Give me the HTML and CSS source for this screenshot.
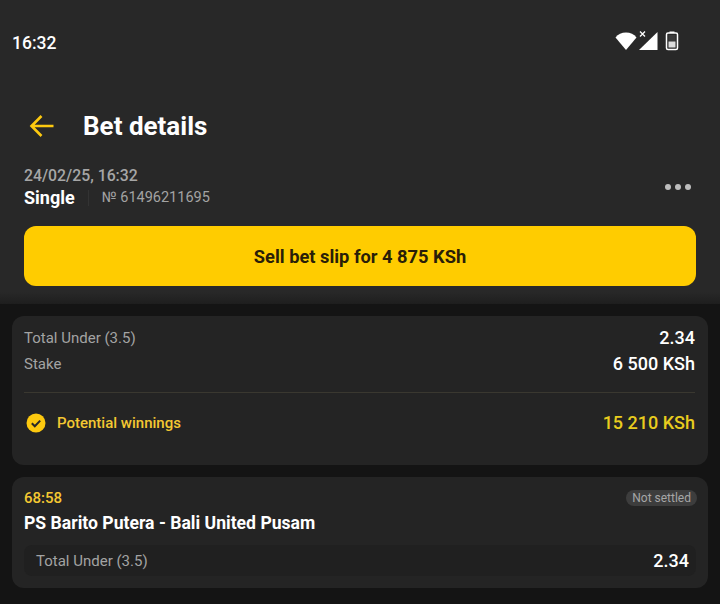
FILE: index.html
```html
<!DOCTYPE html>
<html lang="en">
<head>
  <meta charset="UTF-8">
  <meta name="viewport" content="width=device-width, initial-scale=1.0">
  <title>Bet details</title>
  <link rel="stylesheet" href="styles.css">
</head>
<body>
  <header class="top">
    <div class="status">
      <span class="time">16:32</span>
      <div class="status-icons">
        <svg class="wifi" width="22" height="18" viewBox="0 0 22 18"><path d="M0.500 5.500C3 2.300 6.700 0.500 11 0.500s8 1.800 10.500 5L11 18z" fill="#fff"/></svg>
        <svg class="signal" width="22" height="20" viewBox="0 0 22 20">
          <path d="M20.500 1v18H2z" fill="#fff"/>
          <path d="M3 0.500l5 5M8 0.500l-5 5" stroke="#fff" stroke-width="1.300"/>
        </svg>
        <svg class="battery" width="14" height="20" viewBox="0 0 14 20">
          <path d="M4.500 0.500h5v1.500h-5z" fill="#fff"/>
          <rect x="1.500" y="2" width="11" height="16.500" rx="1.500" fill="none" stroke="#fff" stroke-width="1.500"/>
          <rect x="3.500" y="4" width="7" height="6.500" fill="#3a3a3a"/>
          <rect x="3.500" y="10.500" width="7" height="6" fill="#ddd"/>
        </svg>
      </div>
    </div>
    <div class="titlebar">
      <svg class="back" width="26" height="24" viewBox="0 0 26 24"><path d="M24.500 12H3M12.500 2L2.500 12l10 10" fill="none" stroke="#fdc90f" stroke-width="2.600"/></svg>
      <h1>Bet details</h1>
    </div>
    <div class="meta">
      <div>
        <div class="date">24/02/25, 16:32</div>
        <div class="kind">
          <span class="single">Single</span>
          <span class="sep"></span>
          <span class="number">№ 61496211695</span>
        </div>
      </div>
      <div class="dots"><i></i><i></i><i></i></div>
    </div>
    <button class="sell">Sell bet slip for 4 875 KSh</button>
  </header>

  <main class="content">
    <section class="card summary">
      <div class="row">
        <span class="label">Total Under (3.5)</span>
        <span class="value">2.34</span>
      </div>
      <div class="row stake">
        <span class="label">Stake</span>
        <span class="value">6 500 KSh</span>
      </div>
      <div class="row winnings">
        <span class="win-label">
          <svg width="20" height="20" viewBox="0 0 20 20">
            <circle cx="10" cy="10" r="9.500" fill="#fdc90f"/>
            <path d="M5.800 10.200l3 3 5.400-5.600" fill="none" stroke="#282828" stroke-width="2"/>
          </svg>
          Potential winnings
        </span>
        <span class="win-value">15 210 KSh</span>
      </div>
    </section>

    <section class="card event">
      <div class="row event-top">
        <span class="clock">68:58</span>
        <span class="badge">Not settled</span>
      </div>
      <div class="teams">PS Barito Putera - Bali United Pusam</div>
      <div class="market">
        <span class="label">Total Under (3.5)</span>
        <span class="value">2.34</span>
      </div>
    </section>
  </main>
</body>
</html>
```

FILE: styles.css
```css
html, body {
  height: 100%;
}
body {
  margin: 0;
  font-family: Roboto, Arial, sans-serif;
  background: #141414;
  color: #fff;
  overflow: hidden;
}
.top {
  height: 304px;
  box-sizing: border-box;
  background: linear-gradient(#282828 292px, #1e1e1e);
  padding: 0 24px;
}
.status {
  height: 86px;
  display: flex;
  justify-content: space-between;
  align-items: center;
  margin-left: -12px;
  margin-right: -1px;
}
.time {
  font-size: 17.500px;
  font-weight: 500;
}
.status-icons {
  display: flex;
  align-items: flex-end;
  margin-right: 18px;
  margin-bottom: 4px;
}
.wifi {
  margin-bottom: 1px;
}
.signal {
  margin-right: 6px;
}
.titlebar {
  height: 78px;
  display: flex;
  align-items: center;
  gap: 28px;
  padding-left: 5px;
  padding-top: 1px;
  box-sizing: border-box;
}
.titlebar h1 {
  margin: 0;
  font-size: 26px;
  font-weight: 700;
}
.back {
  display: block;
}
.meta {
  display: flex;
  justify-content: space-between;
  align-items: center;
  height: 47px;
}
.date {
  font-size: 15.800px;
  font-weight: 500;
  color: #a6a6a6;
  line-height: 20px;
}
.kind {
  display: flex;
  align-items: center;
  line-height: 24px;
}
.single {
  font-size: 18px;
  font-weight: 700;
}
.sep {
  width: 1px;
  height: 16px;
  background: #333;
  margin: 0 13px;
}
.number {
  font-size: 14.500px;
  color: #a3a3a3;
}
.dots {
  display: flex;
  gap: 4px;
  margin-right: 5px;
  margin-bottom: 1px;
}
.dots i {
  width: 6px;
  height: 6px;
  border-radius: 50%;
  background: #bdbdbd;
}
.sell {
  display: block;
  width: 100%;
  height: 60px;
  margin-top: 15px;
  border: none;
  border-radius: 12px;
  background: #ffcc00;
  color: #2a1e08;
  font-family: inherit;
  font-size: 18.300px;
  font-weight: 700;
}
.content {
  padding: 12px;
  display: flex;
  flex-direction: column;
  gap: 12px;
}
.card {
  background: #242424;
  border-radius: 12px;
  padding: 0 13px 0 12px;
}
.summary {
  height: 149px;
  box-sizing: border-box;
  padding-top: 9px;
}
.row {
  display: flex;
  justify-content: space-between;
  align-items: center;
}
.label {
  font-size: 15px;
  color: #a3a3a3;
}
.value {
  font-size: 18px;
  font-weight: 500;
}
.row .value {
  line-height: 26px;
}
.stake {
  padding-bottom: 15px;
  border-bottom: 1px solid #3a3830;
}
.winnings {
  padding-top: 19px;
}
.win-label {
  display: flex;
  align-items: center;
  gap: 11px;
  margin-left: 2px;
  font-size: 15px;
  font-weight: 500;
  color: #f4c832;
}
.win-value {
  font-size: 18px;
  font-weight: 500;
  color: #e8cc1e;
}
.event {
  height: 111px;
  box-sizing: border-box;
  padding-top: 10px;
  padding-right: 12px;
}
.event-top {
  height: 22px;
}
.clock {
  font-size: 15px;
  font-weight: 500;
  color: #f4c832;
}
.badge {
  font-size: 12px;
  color: #a6a6a6;
  background: #3d3d3d;
  border-radius: 8px;
  padding: 1px 6px;
  margin-right: -1px;
}
.teams {
  font-size: 17.600px;
  font-weight: 700;
  line-height: 28px;
}
.market {
  display: flex;
  justify-content: space-between;
  align-items: center;
  height: 31px;
  margin-top: 8px;
  padding: 0 7px 0 12px;
  background: #202020;
  border-radius: 8px;
}
```
